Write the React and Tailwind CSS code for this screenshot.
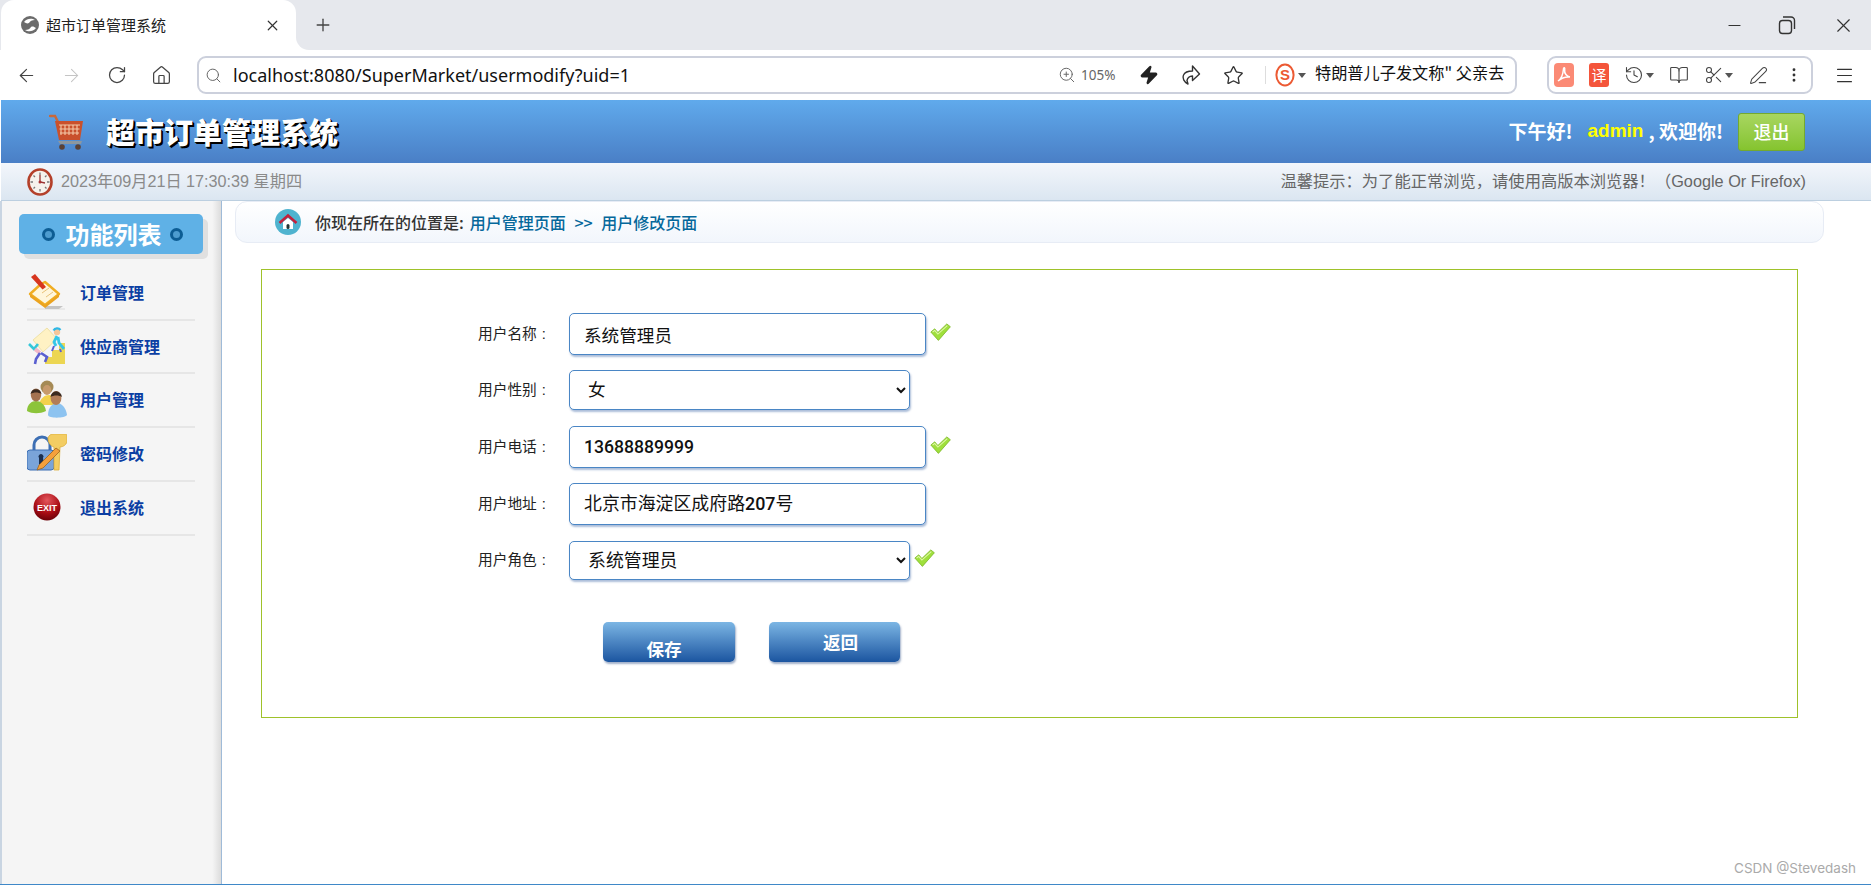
import React from "react";
import { ArrowLeft, ArrowRight, RotateCw, Home, Search, ZoomIn, Zap, Star, X, Plus, Minus, BookOpen, Scissors, History, EllipsisVertical, Menu, PenLine } from "lucide-react";

const Caret = ({ className = "" }) => (
  <svg width="8" height="5" viewBox="0 0 8 5" className={className}><path d="M0 0h8L4 5z" fill="#555" /></svg>
);

const Favicon = () => (
  <svg width="20" height="20" viewBox="0 0 20 20">
    <circle cx="10" cy="10" r="9" fill="#6b6b6b" />
    <path d="M4 7c3-4 8-4 11-2-3 0-5 1-6 3-2 1-3 0-5-1zM16 13c-3 4-8 4-11 2 3 0 5-1 6-3 2-1 3 0 5 1z" fill="#fff" />
  </svg>
);

const Restore = () => (
  <svg width="20" height="22" viewBox="0 0 20 22" fill="none" stroke="#333" strokeWidth="1.4">
    <rect x="2.5" y="6.5" width="12" height="13" rx="3" />
    <path d="M6 3h8a3.500 3.500 0 0 1 3.500 3.500V15" />
  </svg>
);

const ShareOutline = ({ className = "" }) => (
  <svg width="20" height="22" viewBox="0 0 20 22" fill="none" stroke="#333" strokeWidth="1.4" strokeLinejoin="round" className={className}>
    <path d="M11.500 2L18.500 10l-7 6.500v-4.500c-3 .2-5 2-5.500 4.500l1 3.500C3 18 1 14 2.500 11c1.300-2.800 5-4 9-4z" />
  </svg>
);

const SogouS = () => (
  <svg width="20" height="24" viewBox="0 0 20 24">
    <ellipse cx="10" cy="12" rx="8.600" ry="10.500" fill="#fff" stroke="#ec5a33" strokeWidth="2" />
    <text x="10" y="17" textAnchor="middle" fontSize="15" fontWeight="700" fill="#ec5a33" fontFamily="Liberation Sans">S</text>
  </svg>
);

const PdfIcon = () => (
  <svg width="20" height="24" viewBox="0 0 20 24">
    <rect width="20" height="24" rx="4" fill="#fb8a75" />
    <path d="M4 18c3-2 5-6 5.500-12 .2-2 1.600-1.500 1.200 .5-.6 4 2 7 5.300 7.500-4-.5-8 .5-12 4z" fill="none" stroke="#fff" strokeWidth="1.500" />
  </svg>
);

const Cart = () => (
  <svg width="36" height="36" viewBox="0 0 36 36">
    <path d="M1 2h5l3 6" fill="none" stroke="#c8683a" strokeWidth="2.500" strokeLinecap="round" />
    <path d="M6 7h28l-3 19H10z" fill="#c9512c" />
    <path d="M10 11h21M10.500 15h20M11 19h19M12 11v10M16 11v10M20 11v10M24 11v10M28 11v10" stroke="#f4c9a8" strokeWidth="1.100" />
    <path d="M9 27h24l-1 3H11z" fill="#8c97a0" />
    <circle cx="13" cy="33" r="2.800" fill="#5a4136" />
    <circle cx="29" cy="33" r="2.800" fill="#5a4136" />
  </svg>
);

const ClockIcon = () => (
  <svg width="26" height="28" viewBox="0 0 26 28">
    <ellipse cx="13" cy="14" rx="11.500" ry="12.500" fill="#f6f2ec" stroke="#b4402a" strokeWidth="2.600" />
    <g stroke="#777" strokeWidth="1.300">
      <path d="M13 4.500v2.500M13 21v2.500M3.500 14H6M20 14h2.500M6.500 7.500l1.500 1.500M18 19l1.500 1.500M19.500 7.500L18 9M8 19l-1.500 1.500" />
    </g>
    <path d="M13 7v7l5 1" fill="none" stroke="#933" strokeWidth="1.300" />
    <circle cx="13" cy="14" r="1.500" fill="#a33" />
  </svg>
);

const HomeIcon = () => (
  <svg width="26" height="26" viewBox="0 0 26 26">
    <circle cx="13" cy="13" r="13" fill="#4fb3cf" />
    <path d="M8 13v7h10v-7l-5-4z" fill="#fff" />
    <path d="M4.500 14L13 6.500 21.500 14" fill="none" stroke="#c4203c" strokeWidth="2.600" />
    <rect x="11.500" y="15" width="3" height="5" rx="1.500" fill="#233" />
  </svg>
);

const Check = ({ className = "" }) => (
  <svg width="21" height="18" viewBox="0 0 20 17" className={className}>
    <path d="M.8 8.500L4.500 5.500l3 3.500L16 .8 19.400 3.500 8 16.500z" fill="#9fe03c" stroke="#7fb92c" strokeWidth=".8" />
    <path d="M2.500 8.500l2-1.500 3 3.500L16.500 2.500" fill="none" stroke="#e0f7a8" strokeWidth="1" />
  </svg>
);

const Dot = () => (
  <span className="w-[13px] h-[13px] rounded-full border-[3px] border-[#0d5d94] bg-[#4d9ccf]" />
);

const OrderIcon = () => (
  <svg width="40" height="40" viewBox="0 0 40 40">
    <path d="M0 37h38" stroke="#ddd" strokeWidth="1" />
    <path d="M18 34h18l-4 3H18z" fill="#c4c4c4" />
    <path d="M3 22L14 12l4-2 14 12-14 11z" fill="#fff6dc" stroke="#f0ad22" strokeWidth="2.400" strokeLinejoin="round" />
    <path d="M15 21l7-5M19 25l7-5" stroke="#e8c27a" strokeWidth="1" />
    <path d="M3 22l15 11 14-11v3L18 36 3 25z" fill="#eba320" />
    <path d="M4 5l4-3 11 13-3.500 2.500z" fill="#d7351e" />
  </svg>
);

const SupplierIcon = () => (
  <svg width="40" height="38" viewBox="0 0 40 38">
    <path d="M18 37v-7h7v-7h7v-7h6v21z" fill="#ecd652" />
    <path d="M6 13L20 1l10 11-14 13z" fill="#fff2c4" stroke="#efe2a8" />
    <circle cx="30" cy="5" r="3.200" fill="#f5c69a" />
    <path d="M26.500 3.500a4 3.500 0 0 1 7 -.5" stroke="#2fb8e6" strokeWidth="2.200" fill="none" />
    <path d="M30 9l-3 6 2 4M31 10l1 6 5 6" stroke="#35c7e8" strokeWidth="2.800" fill="none" />
    <path d="M27 19l-2 5M33 22l1 3" stroke="#5a5fd0" strokeWidth="2" fill="none" />
    <path d="M2 17l5 5 4-5" stroke="#35c7d8" strokeWidth="2.600" fill="none" />
    <path d="M8 22l5 4" stroke="#f2b8c8" strokeWidth="4" />
    <path d="M13 26l-4 6-1 5M14 26l6 4-2 5" stroke="#5a5fd0" strokeWidth="2.600" fill="none" />
  </svg>
);

const UsersIcon = () => (
  <svg width="40" height="38" viewBox="0 0 40 38">
    <path d="M12 25c1-7 6-10 10-10s9 3 11 10z" fill="#f2d14c" />
    <circle cx="20" cy="7" r="6.500" fill="#a58a55" />
    <ellipse cx="20" cy="10" rx="4.200" ry="5" fill="#c79a6c" />
    <path d="M0 31c0-7 5-10 9-10s9 3 10 10c-6 3-14 3-19 0z" fill="#8cc43a" />
    <ellipse cx="9" cy="15" rx="5.200" ry="6.500" fill="#a47250" />
    <path d="M3.500 14a5.600 6 0 0 1 11 0c-3-2-8-2-11 0z" fill="#3a2a20" />
    <path d="M21 35c0-8 5-12 9-12s9 4 10 12c-1 3-18 4-19 0z" fill="#8dc3f0" />
    <ellipse cx="29" cy="18" rx="5.400" ry="7" fill="#b27d58" />
    <path d="M23.500 17a5.800 6.500 0 0 1 11.500 0c-3-2-8.500-2-11.500 0z" fill="#3a2a20" />
  </svg>
);

const LockIcon = () => (
  <svg width="40" height="38" viewBox="0 0 40 38">
    <path d="M7 17v-6a8 8 0 0 1 16 0v6" fill="none" stroke="#3d6fb4" strokeWidth="3" />
    <rect x="0" y="16" width="27" height="20" rx="3" fill="#7aa4d9" stroke="#3d6fb4" />
    <path d="M12 24a2.500 2.500 0 1 1 4 0l1 6h-5z" fill="#1c3050" />
    <path d="M21 4a6 6 0 0 1 6-4h11a2 2 0 0 1 2 2v6a8 8 0 0 1-7 5l-1 23h-5V13c-4-1-6-5-6-9z" fill="#f3cd63" stroke="#dcae3a" strokeWidth=".8" />
    <path d="M10 36l2-5L29 14l4 3-17 17z" fill="#f4a03c" stroke="#9c6420" strokeWidth=".8" />
  </svg>
);

const ExitIcon = () => (
  <svg width="28" height="28" viewBox="0 0 28 28">
    <defs>
      <radialGradient id="ex" cx="50%" cy="25%" r="80%">
        <stop offset="0" stopColor="#e4565c" />
        <stop offset=".6" stopColor="#a80c14" />
        <stop offset="1" stopColor="#600006" />
      </radialGradient>
    </defs>
    <circle cx="14" cy="14" r="13.500" fill="url(#ex)" />
    <text x="14" y="17.500" textAnchor="middle" fontSize="9" fontWeight="700" fill="#fff" fontFamily="Liberation Sans">EXIT</text>
  </svg>
);

const menu = [
  { label: "订单管理", icon: <OrderIcon />, h: "h-[54px]" },
  { label: "供应商管理", icon: <SupplierIcon />, h: "h-[53px]" },
  { label: "用户管理", icon: <UsersIcon />, h: "h-[54px]" },
  { label: "密码修改", icon: <LockIcon />, h: "h-[54px]" },
  { label: "退出系统", icon: <ExitIcon />, h: "h-[54px]" },
];

const inputCls =
  "h-full w-full rounded-[5px] border border-[#4a86c5] bg-white shadow-[1px_2px_2px_rgba(70,110,170,0.45)] text-[17.6px] text-[#111] outline-none";

function Label({ children }) {
  return (
    <label className="w-[91px] shrink-0 text-[14.7px] text-[#222] whitespace-pre">
      {children}
      <span className="ml-[5px]">:</span>
    </label>
  );
}

export default function App() {
  return (
    <div className="w-[1871px] h-[885px] overflow-hidden flex flex-col bg-white font-['Liberation_Sans','Noto_Sans_CJK_SC',sans-serif]">
      {/* tab strip */}
      <div className="h-[50px] flex shrink-0 bg-white">
        <div className="bg-[#e6e8ed] pl-px">
          <div className="w-[295px] h-full bg-white rounded-t-[13px] flex items-center pl-[19px] pr-[15px]">
            <Favicon />
            <span className="ml-[6px] text-[15px] text-[#222] font-['Noto_Sans_CJK_SC',sans-serif]">超市订单管理系统</span>
            <X size={17} strokeWidth={1.700} className="ml-auto text-[#333]" />
          </div>
        </div>
        <div className="flex-1 bg-[#e6e8ed] rounded-bl-[13px] flex items-center">
          <Plus size={20} strokeWidth={1.600} className="ml-[17px] text-[#444]" />
          <Minus size={19} strokeWidth={1.400} className="ml-[1392px] text-[#333]" />
          <span className="ml-[33px]"><Restore /></span>
          <X size={23} strokeWidth={1.200} className="ml-[35px] text-[#333]" />
        </div>
      </div>

      {/* toolbar */}
      <div className="h-[50px] shrink-0 bg-white flex items-center pl-[4px]">
        <span className="w-[45px] flex justify-center"><ArrowLeft size={21} strokeWidth={1.400} className="text-[#444]" /></span>
        <span className="w-[45px] flex justify-center"><ArrowRight size={21} strokeWidth={1.200} className="text-[#c4c4c4]" /></span>
        <span className="w-[45px] flex justify-center"><RotateCw size={20} strokeWidth={1.500} className="text-[#444]" /></span>
        <span className="w-[45px] flex justify-center"><Home size={21} strokeWidth={1.400} className="text-[#444]" /></span>
        <div className="ml-[13px] w-[1320px] h-[38px] rounded-[9px] border-2 border-[#ccd0dc] flex items-center pl-[6px]">
          <Search size={17} strokeWidth={1.400} className="text-[#666]" />
          <span className="ml-[11px] text-[18px] text-[#111] font-['Noto_Sans',sans-serif] w-[825px]">localhost:8080/SuperMarket/usermodify?uid=1</span>
          <ZoomIn size={18} strokeWidth={1.300} className="text-[#666]" />
          <span className="ml-[5px] text-[13.500px] text-[#666] w-[36px] font-['Noto_Sans',sans-serif]">105%</span>
          <Zap size={20} className="ml-[22px] text-[#222] fill-[#222]" />
          <ShareOutline className="ml-[22px]" />
          <Star size={21} strokeWidth={1.500} className="ml-[22px] text-[#333]" />
          <span className="ml-[21px] w-px h-[18px] bg-[#ddd]" />
          <span className="ml-[9px]"><SogouS /></span>
          <Caret className="ml-[3px]" />
          <span className="ml-[9px] w-[190px] overflow-hidden whitespace-nowrap text-[16.200px] leading-[22px] -mt-[6px] text-[#111] font-['Noto_Sans_CJK_SC',sans-serif]">特朗普儿子发文称" 父亲去</span>
        </div>
        <div className="ml-[30px] w-[266px] h-[38px] rounded-[9px] border-2 border-[#ccd0dc] flex items-center pl-[5px]">
          <PdfIcon />
          <span className="ml-[15px] w-[20px] h-[24px] rounded-[3px] bg-[#f4553b] text-white text-[15px] leading-[24px] text-center font-['Noto_Sans_CJK_SC',sans-serif]">译</span>
          <History size={20} strokeWidth={1.300} className="ml-[15px] text-[#444]" />
          <Caret className="ml-[2px]" />
          <BookOpen size={20} strokeWidth={1.300} className="ml-[15px] text-[#444]" />
          <Scissors size={20} strokeWidth={1.300} className="ml-[15px] text-[#444]" />
          <Caret className="ml-[1px]" />
          <PenLine size={19} strokeWidth={1.300} className="ml-[16px] text-[#444]" />
          <EllipsisVertical size={18} strokeWidth={1.800} className="ml-[17px] text-[#333]" />
        </div>
        <Menu size={21} strokeWidth={1.200} className="ml-[21px] text-[#333]" />
      </div>

      {/* page header */}
      <div className="h-[63px] shrink-0 ml-px bg-gradient-to-b from-[#60aaec] to-[#4a7fc6] flex items-center pl-[48px] pr-[66px]">
        <Cart />
        <h1 className="ml-[21px] text-[29px] leading-none font-black text-white [text-shadow:1px_1px_0_#000,2px_2px_0_#000] font-['Noto_Sans_CJK_SC',sans-serif]">超市订单管理系统</h1>
        <div className="ml-auto flex items-center text-white font-bold text-[19px] font-['Noto_Sans_CJK_SC',sans-serif]">
          <span>下午好!</span>
          <span className="ml-[15px] text-[#ffff00] font-['Liberation_Sans',sans-serif]">admin</span>
          <span className="ml-[5px]">, 欢迎你!</span>
          <button className="ml-[15px] w-[67px] h-[38px] rounded-[3px] border border-[#74a92f] bg-gradient-to-b from-[#a8d65f] to-[#85c42e] text-white text-[18px] font-medium">退出</button>
        </div>
      </div>

      {/* status bar */}
      <div className="h-[38px] shrink-0 ml-px border-b border-[#bccfe0] bg-gradient-to-b from-[#f3f6fb] to-[#dbe6f1] flex items-center pl-[26px] pr-[65px] text-[16px]">
        <ClockIcon />
        <span className="ml-[8px] text-[#8a8a8a] text-[16.200px]">2023年09月21日 17:30:39 星期四</span>
        <span className="ml-auto text-[#666] text-[16.300px] font-['Liberation_Sans_Narrow','Liberation_Sans','Noto_Sans_CJK_SC',sans-serif]">{"温馨提示\uFF1A为了能正常浏览\uFF0C请使用高版本浏览器\uFF01\uFF08Google Or Firefox)"}</span>
      </div>

      {/* body */}
      <div className="flex-1 min-h-0 flex border-b border-[#3f88c8] relative">
        <aside className="w-[222px] shrink-0 border-l-2 border-l-[#c9d5e2] border-r border-r-[#9fbbd8] bg-[linear-gradient(to_right,#f5f5f5_96%,#dcdcdc)] pt-[13px]">
          <div className="ml-[17px] w-[184px] h-[40px] rounded-[5px] bg-[#5fb1e6] shadow-[5px_5px_0_#e0e0e0] flex items-center justify-center gap-[11px] pl-[2px]">
            <Dot />
            <span className="text-[24px] font-bold text-white mr-[-3px] font-['Noto_Sans_CJK_SC',sans-serif]">功能列表</span>
            <Dot />
          </div>
          <ul className="mt-[13px] ml-[25px] w-[168px]">
            {menu.map((m) => (
              <li key={m.label} className={`${m.h} border-b-2 border-[#e6e6e6] flex items-center pb-[2px]`}>
                <span className="w-[40px] flex justify-center">{m.icon}</span>
                <span className="ml-[13px] text-[16px] font-bold text-[#0b3fa3] font-['Noto_Sans_CJK_SC',sans-serif]">{m.label}</span>
              </li>
            ))}
          </ul>
        </aside>

        <main className="flex-1 pl-[13px] pr-[47px]">
          <div className="h-[42px] rounded-[12px] border border-[#e7ecf5] bg-gradient-to-b from-white to-[#f2f6fc] flex items-center pl-[39px] text-[16px] font-medium font-['Noto_Sans_CJK_SC',sans-serif]">
            <HomeIcon />
            <span className="ml-[14px] text-[#333]">你现在所在的位置是:</span>
            <span className="ml-[6px] text-[#05689b]">用户管理页面<span className="mx-[5px]"> &gt;&gt; </span>用户修改页面</span>
          </div>

          <form className="mt-[26px] ml-[26px] w-[1537px] h-[449px] border border-[#9fc22a] pt-[43px] pl-[216px]">
            <div className="h-[42px] flex items-center">
              <Label>用户名称</Label>
              <div className="w-[357px] h-full"><input readOnly defaultValue="系统管理员" className={`${inputCls} pl-[14px]`} /></div>
              <Check className="ml-[4px] -mt-[4px]" />
            </div>
            <div className="mt-[15px] h-[40px] flex items-center">
              <Label>用户性别</Label>
              <div className="w-[341px] h-full">
                <select defaultValue="女" className={`${inputCls} pl-[14px]`}>
                  <option>女</option>
                  <option>男</option>
                </select>
              </div>
            </div>
            <div className="mt-[16px] h-[42px] flex items-center">
              <Label>用户电话</Label>
              <div className="w-[357px] h-full"><input readOnly defaultValue="13688889999" className={`${inputCls} pl-[14px] font-medium font-['Roboto',sans-serif]`} /></div>
              <Check className="ml-[4px] -mt-[4px]" />
            </div>
            <div className="mt-[15px] h-[42px] flex items-center">
              <Label>用户地址</Label>
              <div className="w-[357px] h-full">
                <div className={`${inputCls} pl-[14px] flex items-center`}>
                  <span className="text-[17.900px]">北京市海淀区成府路<span className="font-medium font-['Roboto',sans-serif]">207</span>号</span>
                </div>
              </div>
            </div>
            <div className="mt-[16px] h-[39px] flex items-center">
              <Label>用户角色</Label>
              <div className="w-[341px] h-full">
                <select defaultValue="系统管理员" className={`${inputCls} pl-[14px] text-[17.900px]`}>
                  <option>系统管理员</option>
                  <option>经理</option>
                  <option>普通员工</option>
                </select>
              </div>
              <Check className="ml-[4px] -mt-[6px]" />
            </div>
            <div className="mt-[42px] ml-[125px] flex gap-[34px]">
              <button type="button" className="w-[132px] h-[40px] rounded-[5px] bg-gradient-to-b from-[#7cb6e4] to-[#1b55a0] shadow-[1px_2px_2px_rgba(70,100,150,0.5)] text-white text-[17.600px] font-bold pt-[14px] pr-[10px] leading-none font-['Noto_Sans_CJK_SC',sans-serif]">保存</button>
              <button type="button" className="w-[131px] h-[40px] rounded-[5px] bg-gradient-to-b from-[#7cb6e4] to-[#1b55a0] shadow-[1px_2px_2px_rgba(70,100,150,0.5)] text-white text-[17.600px] font-bold pl-[12px] font-['Noto_Sans_CJK_SC',sans-serif]">返回</button>
            </div>
          </form>
        </main>

        <span className="absolute right-[15px] bottom-[6px] text-[13.500px] text-[#aaa] font-['Inter',sans-serif]">CSDN @Stevedash</span>
      </div>
    </div>
  );
}
